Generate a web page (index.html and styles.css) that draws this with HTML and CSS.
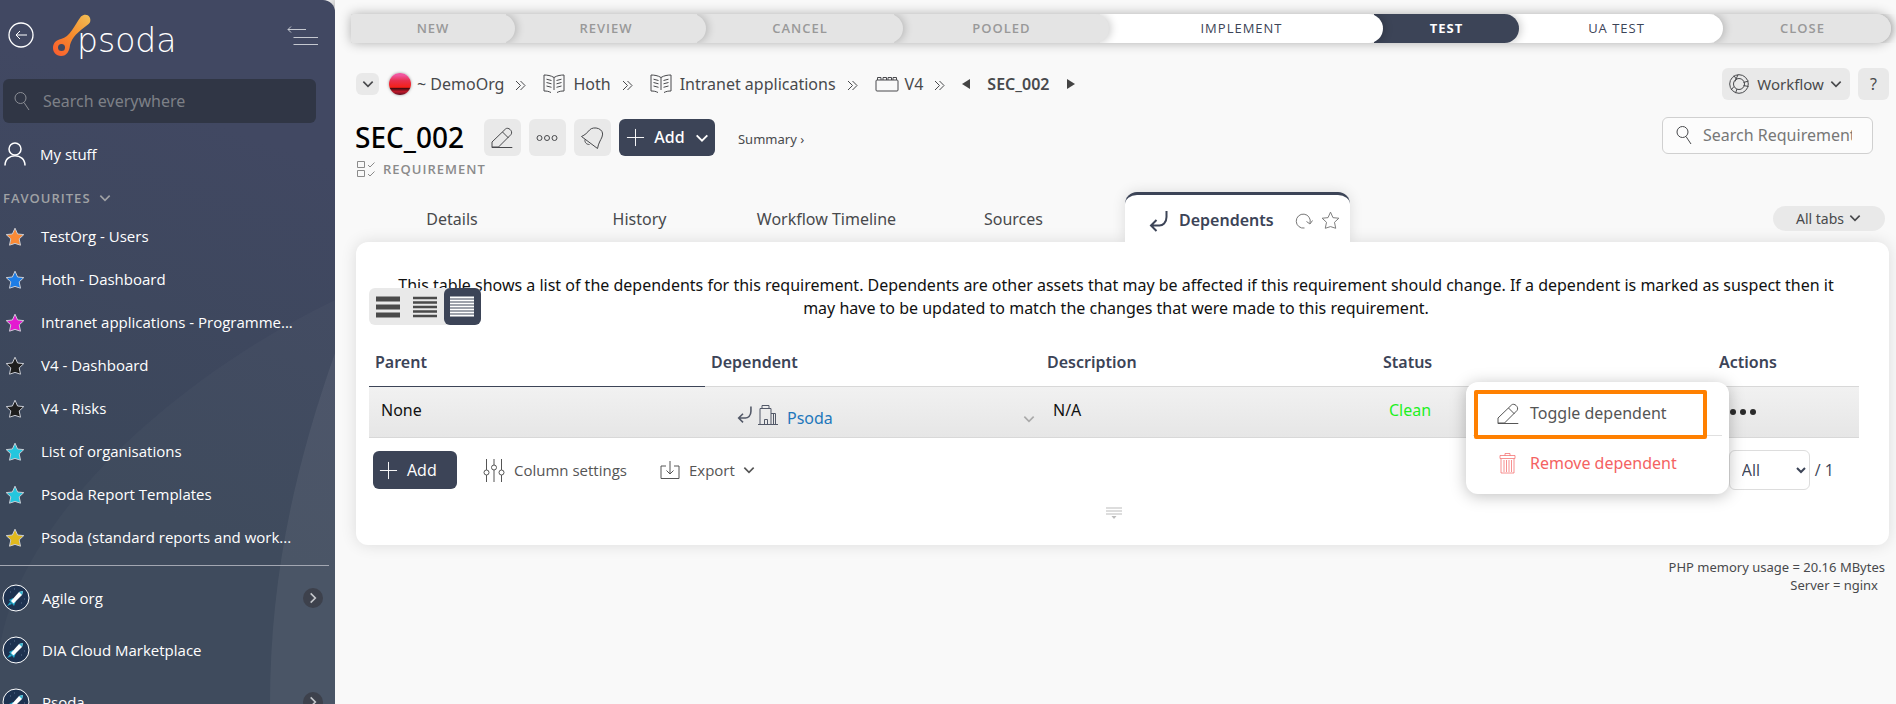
FILE: index.html
```html
<!DOCTYPE html>
<html lang="en">
<head>
    <meta charset="UTF-8">
    <meta name="viewport" content="width=device-width, initial-scale=1.0">
    <title>SEC_002 - Dependents</title>
    <link rel="stylesheet" href="styles.css">
</head>
<body>
    <!-- Shared icons -->
    <svg class="sprite" aria-hidden="true">
        <symbol id="chevron" viewBox="0 0 12 12"><path d="M2 4l4 4 4-4" fill="none" stroke="currentColor" stroke-width="1.400"/></symbol>
        <symbol id="search" viewBox="0 0 20 20"><circle cx="7.5" cy="7" r="5.5"/><path d="M11 11.500l5 7.500"/></symbol>
        <symbol id="star" viewBox="0 0 20 20"><path d="M10 1.200l2.600 5.800 6.200.6-4.600 4.300 1.300 6.300-5.500-1.800-5.500 1.800 1.300-6.300L1.200 7.600l6.200-.6z" stroke-linejoin="round"/></symbol>
        <symbol id="pencil" viewBox="0 0 22 22"><path d="M.7 20.500h20.600M1 20v-5L14.500 2c2.500-2.500 8 2 5.500 5.500L7.500 20H1M11.500 5l6 6"/></symbol>
        <symbol id="book" viewBox="0 0 22 20"><path d="M11 3.500C8 1.500 4 1 1 1v16c3 0 4.500.3 7 1.500M11 3.500C14 1.500 18 1 21 1v16c-3 0-4.500.3-7 1.500M11 3.500V16M3.500 5.200l5 1.300M3.500 8.500l5 1.300M3.500 12l5 1.300M18.500 5.200l-5 1.300M18.500 8.500l-5 1.300M18.500 12l-5 1.300"/></symbol>
        <symbol id="guillemet" viewBox="0 0 11 11"><path d="M1 1l4.500 4.500L1 10M5.500 1l4.500 4.500L5.500 10"/></symbol>
        <symbol id="return" viewBox="0 0 20 24"><path d="M17.500 2v6c0 6-4 8.500-7 8.500H2M7.500 11L2 16.500 7.500 22"/></symbol>
        <symbol id="plus" viewBox="0 0 20 20"><path d="M10 1v18M1 10h18"/></symbol>
        <symbol id="rocket" viewBox="0 0 28 28">
            <circle cx="14" cy="14" r="13" fill="#1e3250" stroke="#fff" stroke-width="1"/>
            <path d="M7 16l4-2 3 3-2 5zM5 22l3-4 2 2z" fill="#1fa5c8"/>
            <path d="M21 7l-4 1-8 9 2.500 2.500L20 11z" fill="#fff"/>
            <path d="M21 7l-4 1 3 3z" fill="#35b8d4"/>
            <path d="M8 8h1M19 19h1M12 5h1M22 15h1" stroke="#5b708e"/>
        </symbol>
    </svg>

    <aside class="sidebar">
        <svg class="sidebar-art" viewBox="0 0 335 704" preserveAspectRatio="xMaxYMin slice" aria-hidden="true">
            <path d="M335 300C170 380 20 520 0 646v58h335z" fill="#fff" fill-opacity=".025"/>
            <path d="M335 353C290 480 270 590 270 704h65z" fill="#fff" fill-opacity=".06"/>
        </svg>

        <div class="brand">
            <button class="plain back" aria-label="Back">
                <svg width="26" height="26" viewBox="0 0 26 26" class="line"><circle cx="13" cy="13" r="12" stroke-width="1.300"/><path d="M8 13h11M12 9l-4 4 4 4"/></svg>
            </button>
            <a href="#" class="logo">
                <svg width="38" height="43" viewBox="0 0 38 43">
                    <defs><linearGradient id="flame" x1="1" y1="0" x2="0" y2="1"><stop offset="0" stop-color="#f2c057"/><stop offset=".5" stop-color="#f68b2c"/><stop offset="1" stop-color="#fb5a2f"/></linearGradient></defs>
                    <path d="M28 2.500C31 0 35 .5 36.500 3s1 6-1.500 7.500C25 18 19 23 17 31c-.5 6-3 11-9 11-5 0-8-4-8-8 0-5 3-8 8-9 9-2 13-13 20-22.500z" fill="url(#flame)"/>
                    <circle cx="8.500" cy="33.500" r="3.500" fill="#40485f"/>
                </svg>
                <span>psoda</span>
            </a>
            <button class="plain collapse" aria-label="Collapse menu">
                <svg width="32" height="20" viewBox="0 0 32 20" class="line"><path d="M19 3.500H1M4 .5l-3 3 3 3M6.500 11.500H31M6.500 18.500H31"/></svg>
            </button>
        </div>

        <label class="side-search">
            <svg width="20" height="20" class="line"><use href="#search"/></svg>
            <input type="text" placeholder="Search everywhere" aria-label="Search everywhere">
        </label>

        <a href="#" class="my-stuff">
            <svg width="22" height="24" viewBox="0 0 22 24" class="line"><circle cx="11" cy="7" r="6" stroke-width="1.500"/><path d="M1 23.500c0-13 20-13 20 0" stroke-width="1.500"/></svg>
            My stuff
        </a>

        <button class="plain fav-title">FAVOURITES <svg width="14" height="14"><use href="#chevron"/></svg></button>
        <ul class="favourites">
            <li><a href="#"><svg class="star orange"><use href="#star"/></svg>TestOrg - Users</a></li>
            <li><a href="#"><svg class="star blue"><use href="#star"/></svg>Hoth - Dashboard</a></li>
            <li><a href="#"><svg class="star pink"><use href="#star"/></svg>Intranet applications - Programme...</a></li>
            <li><a href="#"><svg class="star black"><use href="#star"/></svg>V4 - Dashboard</a></li>
            <li><a href="#"><svg class="star black"><use href="#star"/></svg>V4 - Risks</a></li>
            <li><a href="#"><svg class="star cyan"><use href="#star"/></svg>List of organisations</a></li>
            <li><a href="#"><svg class="star cyan"><use href="#star"/></svg>Psoda Report Templates</a></li>
            <li><a href="#"><svg class="star yellow"><use href="#star"/></svg>Psoda (standard reports and work...</a></li>
        </ul>

        <ul class="orgs">
            <li><a href="#"><svg width="28" height="28"><use href="#rocket"/></svg>Agile org</a><button class="expand" aria-label="Expand Agile org"><svg width="14" height="14"><use href="#chevron"/></svg></button></li>
            <li><a href="#"><svg width="28" height="28"><use href="#rocket"/></svg>DIA Cloud Marketplace</a></li>
            <li><a href="#"><svg width="28" height="28"><use href="#rocket"/></svg>Psoda</a><button class="expand" aria-label="Expand Psoda"><svg width="14" height="14"><use href="#chevron"/></svg></button></li>
        </ul>
    </aside>

    <main>
        <ol class="workflow">
            <li>NEW</li>
            <li>REVIEW</li>
            <li>CANCEL</li>
            <li>POOLED</li>
            <li class="open">IMPLEMENT</li>
            <li class="current">TEST</li>
            <li class="open">UA TEST</li>
            <li>CLOSE</li>
        </ol>

        <div class="top-row">
            <nav class="breadcrumb">
                <button class="crumb-toggle" aria-label="Show path"><svg width="14" height="14"><use href="#chevron"/></svg></button>
                <a href="#" class="org"><span class="avatar"></span>~ DemoOrg</a>
                <svg width="11" height="11" class="line sep"><use href="#guillemet"/></svg>
                <a href="#"><svg width="22" height="20" class="line"><use href="#book"/></svg>Hoth</a>
                <svg width="11" height="11" class="line sep"><use href="#guillemet"/></svg>
                <a href="#"><svg width="22" height="20" class="line"><use href="#book"/></svg>Intranet applications</a>
                <svg width="11" height="11" class="line sep"><use href="#guillemet"/></svg>
                <a href="#" class="release"><svg width="24" height="16" viewBox="0 0 24 16" class="line"><rect x="1" y="4" width="22" height="11" rx="1"/><path d="M2.500 4V1.500H6V4M8 4V1.500h3.500V4M13 4V1.500h3.500V4M18 4V1.500h3.500V4"/></svg>V4</a>
                <svg width="11" height="11" class="line sep"><use href="#guillemet"/></svg>
                <button class="plain step" aria-label="Previous"><svg width="8" height="10"><path d="M8 0v10L0 5z"/></svg></button>
                <strong>SEC_002</strong>
                <button class="plain step" aria-label="Next"><svg width="8" height="10"><path d="M0 0v10l8-5z"/></svg></button>
            </nav>
            <div class="top-actions">
                <button class="btn workflow-btn">
                    <svg width="20" height="20" viewBox="0 0 20 20" class="line"><circle cx="10" cy="10" r="9.300"/><circle cx="10" cy="10" r="5.500"/><path d="M5 1.500l2.500 4M9 .7L6 7.500M14.500 8.500l5-1.500M14.500 11.500l5 1M5 12.500L2 16M8 15l-1.500 4"/></svg>
                    Workflow
                    <svg width="14" height="14"><use href="#chevron"/></svg>
                </button>
                <button class="btn help">?</button>
            </div>
        </div>

        <div class="title-row">
            <div class="title-left">
                <h1>SEC_002</h1>
                <button class="btn square" aria-label="Edit"><svg width="22" height="22" class="line"><use href="#pencil"/></svg></button>
                <button class="btn square" aria-label="More"><svg width="22" height="8" viewBox="0 0 22 8" class="line"><circle cx="3.500" cy="4" r="2.500"/><circle cx="11" cy="4" r="2.500"/><circle cx="18.500" cy="4" r="2.500"/></svg></button>
                <button class="btn square" aria-label="Notify"><svg width="24" height="24" viewBox="0 0 24 24" class="line"><path d="M1.500 10.500C5 9 7.500 6.500 9.500 4c4-4.500 16-1.500 12.500 7-1.500 3.500-3.500 6-4.500 11.500zM5 13.500c-.5 3 1.500 5 4.500 5"/></svg></button>
                <button class="btn dark"><svg width="19" height="19" class="line"><use href="#plus"/></svg>Add<svg width="16" height="16"><use href="#chevron"/></svg></button>
                <a href="#" class="summary">Summary ›</a>
            </div>
            <label class="main-search">
                <svg width="20" height="20" class="line"><use href="#search"/></svg>
                <input type="text" placeholder="Search Requirements" aria-label="Search Requirements">
            </label>
        </div>
        <div class="asset-type">
            <svg width="18" height="18" viewBox="0 0 18 18" class="line"><path d="M.5 1.500h7v6h-7zM.5 10.500h7v6h-7zM11 5l2 2 4.500-4.500M11 14l2 2 4.500-4.500"/></svg>
            REQUIREMENT
        </div>

        <div class="tabs">
            <a href="#" class="tab details">Details</a>
            <a href="#" class="tab history">History</a>
            <a href="#" class="tab timeline">Workflow Timeline</a>
            <a href="#" class="tab sources">Sources</a>
            <div class="tab active">
                <svg width="20" height="24" class="line return"><use href="#return"/></svg>
                <a href="#">Dependents</a>
                <button class="plain" aria-label="Refresh"><svg width="18" height="18" viewBox="0 0 18 18" class="line"><path d="M9.500 16A7 7 0 1 1 15 11M11.500 9.500l3.500 2.500 2.500-3.500"/></svg></button>
                <button class="plain" aria-label="Favourite"><svg width="19" height="19" class="line"><use href="#star"/></svg></button>
            </div>
            <button class="all-tabs">All tabs <svg width="14" height="14"><use href="#chevron"/></svg></button>
        </div>

        <section class="card">
            <p class="intro">This table shows a list of the dependents for this requirement. Dependents are other assets that may be affected if this requirement should change. If a dependent is marked as suspect then it may have to be updated to match the changes that were made to this requirement.</p>
            <div class="density">
                <button aria-label="Roomy rows"><svg width="24" height="22"><path d="M0 3h24M0 11h24M0 19h24" stroke="currentColor" stroke-width="5"/></svg></button>
                <button aria-label="Normal rows"><svg width="24" height="22"><path d="M0 2h24M0 6.500h24M0 11h24M0 15.500h24M0 20h24" stroke="currentColor" stroke-width="2.500"/></svg></button>
                <button class="selected" aria-label="Compact rows"><svg width="24" height="22"><path d="M0 1.500h24M0 4.500h24M0 7.500h24M0 10.500h24M0 13.500h24M0 16.500h24M0 19.500h24" stroke="currentColor" stroke-width="2"/></svg></button>
            </div>

            <table>
                <thead>
                    <tr><th class="sorted">Parent</th><th>Dependent</th><th>Description</th><th>Status</th><th class="actions">Actions</th></tr>
                </thead>
                <tbody>
                    <tr>
                        <td>None</td>
                        <td>
                            <div class="dependent">
                                <svg width="16" height="19" class="line return"><use href="#return"/></svg>
                                <svg width="20" height="20" viewBox="0 0 20 20" class="line"><path d="M0 19.500h20M2 19V3.500h11V19M4 3.500v-3h7v3M13 8.500h4.500V19M6.500 19v-4.500h3V19M15.500 8.500V19"/></svg>
                                <a href="#">Psoda</a>
                                <svg width="14" height="14" class="row-menu"><use href="#chevron"/></svg>
                            </div>
                        </td>
                        <td>N/A</td>
                        <td class="clean">Clean</td>
                        <td class="actions">
                            <button class="plain dots" aria-label="Actions"><svg width="28" height="8"><circle cx="4" cy="4" r="3"/><circle cx="14" cy="4" r="3"/><circle cx="24" cy="4" r="3"/></svg></button>
                            <div class="menu">
                                <button class="toggle"><svg width="22" height="22" class="line"><use href="#pencil"/></svg>Toggle dependent</button>
                                <button class="remove"><svg width="22" height="22" viewBox="0 0 22 22" class="line"><path d="M3 2.500h15v3H3zM8 2.500v-2h5v2M4 6v14h13V6M7 7v12M9.500 7v12M12 7v12M14.500 7v12"/></svg>Remove dependent</button>
                            </div>
                        </td>
                    </tr>
                </tbody>
            </table>

            <div class="table-tools">
                <button class="btn dark"><svg width="19" height="19" class="line"><use href="#plus"/></svg>Add</button>
                <button class="plain columns"><svg width="22" height="24" viewBox="0 0 22 24" class="line"><path d="M3.500 1v11M3.500 17v7M11 1v6M11 12v12M18.500 1v11M18.500 17v7"/><circle cx="3.500" cy="14.500" r="2.500"/><circle cx="11" cy="9.500" r="2.500"/><circle cx="18.500" cy="14.500" r="2.500"/></svg>Column settings</button>
                <button class="plain export"><svg width="20" height="20" viewBox="0 0 20 20" class="line"><path d="M6 6H1v12.500h18V6h-5M10 1v13M6.500 10.500L10 14l3.500-3.500"/></svg>Export<svg width="14" height="14"><use href="#chevron"/></svg></button>
                <div class="pager">
                    <select aria-label="Rows per page"><option>All</option></select>
                    <span>/ 1</span>
                </div>
            </div>
            <svg class="grip" width="16" height="12"><path d="M0 1h16M0 4h16M0 7h16" stroke="currentColor"/><path d="M5.500 9h5L8 12z" fill="currentColor"/></svg>
        </section>

        <footer>
            <p>PHP memory usage = 20.16 MBytes</p>
            <p class="server">Server = nginx</p>
        </footer>
    </main>
</body>
</html>
```

FILE: styles.css
```css
* {
    box-sizing: border-box;
}
body {
    margin: 0;
    display: flex;
    height: 100vh;
    overflow: hidden;
    background: #f9f9f9;
    color: #111;
    font-family: "Noto Sans", "Open Sans", sans-serif;
    font-size: 16px;
    line-height: 23px;
}
a {
    color: inherit;
    text-decoration: none;
}
button, input, select {
    font: inherit;
    color: inherit;
}
button {
    cursor: pointer;
    border: 0;
}
ul, ol {
    list-style: none;
    margin: 0;
    padding: 0;
}
svg {
    flex: none;
}
.sprite {
    position: absolute;
    width: 0;
    height: 0;
}
.line {
    fill: none;
    stroke: currentColor;
}
.plain {
    background: none;
    padding: 0;
    display: flex;
    align-items: center;
}

/* Sidebar */
.sidebar {
    position: relative;
    z-index: 1;
    flex: none;
    width: 335px;
    height: 100vh;
    overflow: hidden;
    border-top-right-radius: 12px;
    background: linear-gradient(20deg, #3b475a 30%, #414862 80%);
    color: #fff;
    font-family: "Open Sans", sans-serif;
    font-size: 15px;
}
.sidebar-art {
    position: absolute;
    inset: 0;
    width: 100%;
    height: 100%;
    z-index: -1;
}
.brand {
    display: flex;
    align-items: flex-start;
    height: 79px;
    padding: 14px 16px 0 8px;
}
.back {
    margin: 8px 19px 0 0;
}
.logo {
    display: flex;
    flex: 1;
}
.logo span {
    margin: 11px 0 0 -14px;
    font-family: "DejaVu Sans", sans-serif;
    font-size: 33px;
    font-weight: 200;
    line-height: 32px;
}
.collapse {
    margin-top: 12px;
    color: #c5c8d0;
}
.side-search {
    display: flex;
    align-items: center;
    gap: 10px;
    width: 313px;
    height: 44px;
    margin-left: 3px;
    padding: 0 10px;
    border-radius: 6px;
    background: #303645;
    color: #8b8e95;
    font-family: "Noto Sans", "Open Sans", sans-serif;
    font-size: 16px;
}
.side-search input, .main-search input {
    flex: 1;
    min-width: 0;
    padding: 0;
    border: 0;
    outline: 0;
    background: none;
}
.side-search input::placeholder {
    color: #7d8087;
}
.my-stuff {
    display: flex;
    align-items: center;
    gap: 14px;
    height: 62px;
    padding-left: 4px;
    font-weight: 500;
}
.fav-title {
    height: 26px;
    gap: 7px;
    margin-bottom: 4px;
    padding-left: 3px;
    color: #a0a2a5;
    font-size: 13px;
    font-weight: 600;
    letter-spacing: 1px;
}
.favourites a {
    display: flex;
    align-items: center;
    gap: 16px;
    height: 43px;
    padding-left: 5px;
}
.star {
    width: 20px;
    height: 20px;
    stroke: #c9ccd4;
}
.orange { fill: #fb8a35; }
.blue { fill: #1d7de6; }
.pink { fill: #e41bd0; }
.black { fill: #1e1e1e; }
.cyan { fill: #25c6de; }
.yellow { fill: #e0b91d; }
.orgs {
    margin: 6px 6px 0 0;
    padding-top: 6px;
    border-top: 1px solid #a3a7b2;
}
.orgs li {
    display: flex;
    align-items: center;
    justify-content: space-between;
    height: 52px;
    padding: 0 6px 0 2px;
}
.orgs a {
    display: flex;
    align-items: center;
    gap: 12px;
}
.expand {
    display: flex;
    align-items: center;
    justify-content: center;
    width: 20px;
    height: 20px;
    padding: 0;
    border-radius: 50%;
    background: #3d414c;
    color: #c4c6cb;
}
.expand svg {
    transform: rotate(-90deg);
}

/* Main area */
main {
    flex: 1;
    min-width: 0;
    padding: 14px 7px 0 21px;
    color: #48494c;
    box-shadow: 0 0 16px rgba(0, 0, 0, 0.5);
}
.workflow {
    display: grid;
    grid-template-columns: 155fr 191fr 197fr 206fr 274fr 136fr 204fr 177fr;
    margin: 0 -2px 0 -5px;
    border-radius: 4px 15px 15px 4px;
    box-shadow: 0 0 12px rgba(0, 0, 0, 0.3);
    color: #999;
    font-family: "Open Sans", sans-serif;
    font-size: 13px;
    font-weight: 600;
    letter-spacing: 1px;
}
.workflow li {
    position: relative;
    display: flex;
    align-items: center;
    justify-content: center;
    height: 29px;
    margin-right: -9px;
    border-radius: 0 15px 15px 0;
    background: #e4e4e4;
    box-shadow: 2px 0 8px rgba(0, 0, 0, 0.2);
    clip-path: inset(0 -12px 0 0);
}
.workflow li:nth-child(1) { z-index: 8; border-radius: 4px 15px 15px 4px; }
.workflow li:nth-child(2) { z-index: 7; }
.workflow li:nth-child(3) { z-index: 6; }
.workflow li:nth-child(4) { z-index: 5; }
.workflow li:nth-child(5) { z-index: 4; }
.workflow li:nth-child(6) { z-index: 3; }
.workflow li:nth-child(7) { z-index: 2; }
.workflow li:last-child { margin-right: 0; }
.workflow .open {
    background: #fff;
    color: #3c4457;
    font-weight: 500;
}
.workflow .current {
    background: #3c4457;
    color: #fff;
    font-weight: 700;
}
.top-row, .title-row {
    display: flex;
    justify-content: space-between;
    align-items: center;
}
.top-row {
    margin-top: 25px;
}
.breadcrumb {
    display: flex;
    align-items: center;
}
.breadcrumb a {
    display: flex;
    align-items: center;
    gap: 8px;
}
.breadcrumb .org, .breadcrumb .release {
    gap: 6px;
}
.sep {
    margin: 2px 17px 0 11px;
}
.breadcrumb .release + .sep {
    margin-right: 0;
}
.crumb-toggle {
    display: flex;
    align-items: center;
    justify-content: center;
    width: 23px;
    height: 22px;
    margin-right: 10px;
    padding: 0;
    border-radius: 6px;
    background: #e9e9e9;
}
.avatar {
    width: 22px;
    height: 22px;
    border-radius: 50%;
    background: linear-gradient(#f0569f 10%, #e8304e 35%, #f42018 65%, #4a0a10 70%, #c0182a 85%, #5a1020);
    box-shadow: 0 0 3px rgba(0, 0, 0, 0.4);
}
.step {
    margin: 0 17px;
    fill: #444;
}
.breadcrumb strong {
    font-weight: 600;
}
.top-actions {
    display: flex;
    gap: 8px;
    padding-right: 0;
}
.btn {
    display: flex;
    align-items: center;
    justify-content: center;
    padding: 0;
    border-radius: 6px;
    background: #e9e9e9;
}
.workflow-btn {
    gap: 5px;
    width: 128px;
    height: 32px;
    font-size: 15px;
}
.workflow-btn .line {
    margin-right: 3px;
}
.help {
    width: 31px;
    height: 32px;
}
.title-row {
    margin-top: 16px;
    height: 43px;
}
.title-left {
    display: flex;
    align-items: center;
    gap: 8px;
}
h1 {
    margin: 0 12px 0 -1px;
    color: #000;
    font-size: 28px;
    font-weight: 500;
    line-height: 37px;
}
.square {
    width: 37px;
    height: 37px;
}
.dark {
    gap: 9px;
    height: 37px;
    padding: 0 4px 0 6px;
    background: #3c4457;
    color: #fff;
    font-weight: 500;
}
.title-left .dark {
    width: 96px;
}
.summary {
    margin: 4px 0 0 15px;
    font-size: 13px;
}
.main-search {
    display: flex;
    align-items: center;
    gap: 8px;
    width: 211px;
    height: 37px;
    margin: 0 16px 5px 0;
    padding: 0 20px 0 12px;
    border: 1px solid #d0d0d0;
    border-radius: 6px;
    background: #fcfcfc;
}
.main-search input::placeholder {
    color: #777;
}
.asset-type {
    display: flex;
    align-items: center;
    gap: 8px;
    height: 20px;
    padding-left: 1px;
    color: #8b8b8b;
    font-family: "Open Sans", sans-serif;
    font-size: 13px;
    font-weight: 600;
    letter-spacing: 1px;
}

/* Tabs and card */
.tabs {
    display: flex;
    align-items: center;
    margin-top: 13px;
    height: 50px;
}
.tab {
    padding-top: 5px;
    text-align: center;
}
.details { width: 192px; }
.history { width: 183px; }
.timeline { width: 191px; }
.sources { width: 183px; }
.active {
    position: relative;
    display: flex;
    align-items: center;
    width: 225px;
    height: 50px;
    margin-left: 20px;
    padding: 4px 10px 0 24px;
    border-top: 3px solid #3c4457;
    border-radius: 12px 12px 0 0;
    background: #fff;
    box-shadow: 0 0 14px rgba(0, 0, 0, 0.12);
    color: #3c4457;
    font-weight: 600;
    clip-path: inset(-20px -20px 0 -20px);
}
.active a {
    flex: 1;
    margin-left: 10px;
    text-align: left;
}
.active button {
    margin-left: 8px;
    color: #777;
}
.return {
    color: #3c4457;
    stroke-width: 2;
}
.all-tabs {
    display: flex;
    align-items: center;
    justify-content: center;
    gap: 4px;
    width: 112px;
    height: 25px;
    margin: 2px 4px 0 auto;
    padding: 0;
    border-radius: 13px;
    background: #e9e9e9;
    font-size: 14px;
}
.card {
    padding: 32px 30px 26px 13px;
    border-radius: 12px;
    background: #fff;
    box-shadow: 0 0 16px rgba(0, 0, 0, 0.12);
    color: #111;
}
.intro {
    margin: 0;
    padding: 0 10px 0 14px;
    text-align: center;
}
.density {
    position: relative;
    display: flex;
    width: 112px;
    height: 37px;
    margin-top: -32px;
    border-radius: 6px;
    background: #e9e9e9;
    color: #4a4a4a;
}
.density button {
    display: flex;
    flex: 1;
    align-items: center;
    justify-content: center;
    padding: 0;
    border-radius: 6px;
    background: none;
}
.density .selected {
    background: #3c4457;
    color: #fff;
}
table {
    width: 100%;
    margin-top: 13px;
    border-spacing: 0;
    table-layout: fixed;
}
th {
    height: 49px;
    padding: 0 6px;
    border-bottom: 1px solid #d8d8d8;
    color: #3c4457;
    font-weight: 600;
    text-align: left;
}
th.sorted {
    border-bottom-color: #3c4457;
}
th.actions {
    width: 146px;
}
tbody tr {
    background: linear-gradient(#f1f1f1, #e6e6e6);
}
td {
    height: 51px;
    padding: 12px 12px 7px;
    border-bottom: 1px solid #d8d8d8;
    vertical-align: top;
}
.dependent {
    display: flex;
    align-items: center;
    gap: 5px;
    padding-left: 20px;
}
.dependent a {
    margin: 8px auto 0 4px;
    color: #2277bb;
}
.dependent .line {
    color: #535968;
}
.dependent .row-menu {
    margin: 8px -7px 0 0;
    color: #aaa;
}
.clean {
    color: #1ef01e;
}
td.actions {
    position: relative;
}
.dots {
    height: 23px;
    margin: 1px 0 0 4px;
    fill: #2b2b2b;
}
.menu {
    position: absolute;
    top: -5px;
    right: 130px;
    width: 263px;
    padding: 8px 7px 10px;
    border-radius: 12px;
    background: #fff;
    box-shadow: 0 2px 16px rgba(0, 0, 0, 0.25);
}
.menu button {
    display: flex;
    align-items: center;
    gap: 11px;
    width: 100%;
    height: 46px;
    padding: 2px 24px 0;
    border-bottom: 1px solid #e0e0e0;
    background: none;
    color: #555;
}
.menu .toggle {
    position: relative;
}
.menu .toggle::after {
    content: "";
    position: absolute;
    inset: 0 15px -4px 1px;
    border: 4px solid #ff8000;
    border-radius: 2px;
}
.menu .remove {
    height: 43px;
    margin-top: 5px;
    border-bottom: 0;
    color: #f46262;
}
.remove .line {
    stroke-opacity: 0.7;
}
.table-tools {
    display: flex;
    align-items: center;
    height: 64px;
    padding-left: 4px;
    color: #555;
    font-family: "Open Sans", sans-serif;
    font-size: 15px;
}
.table-tools .dark {
    justify-content: flex-start;
    width: 84px;
    height: 38px;
    font-size: 16px;
}
.columns {
    gap: 9px;
    margin-left: 26px;
}
.export {
    gap: 9px;
    margin-left: 33px;
}
.export svg:last-child {
    margin-left: -2px;
}
.pager {
    display: flex;
    align-items: center;
    gap: 5px;
    margin-left: auto;
    padding-right: 25px;
    color: #3c4457;
    font-size: 16px;
}
select {
    width: 81px;
    height: 40px;
    padding-left: 8px;
    border: 1px solid #ddd;
    border-radius: 6px;
    background: #fff;
}
.grip {
    display: block;
    margin: 5px auto 0;
    color: #bbb;
}
footer {
    padding: 13px 4px 0 0;
    font-size: 13px;
    line-height: 18px;
    text-align: right;
}
footer p {
    margin: 0;
}
.server {
    padding-right: 7px;
}
```
